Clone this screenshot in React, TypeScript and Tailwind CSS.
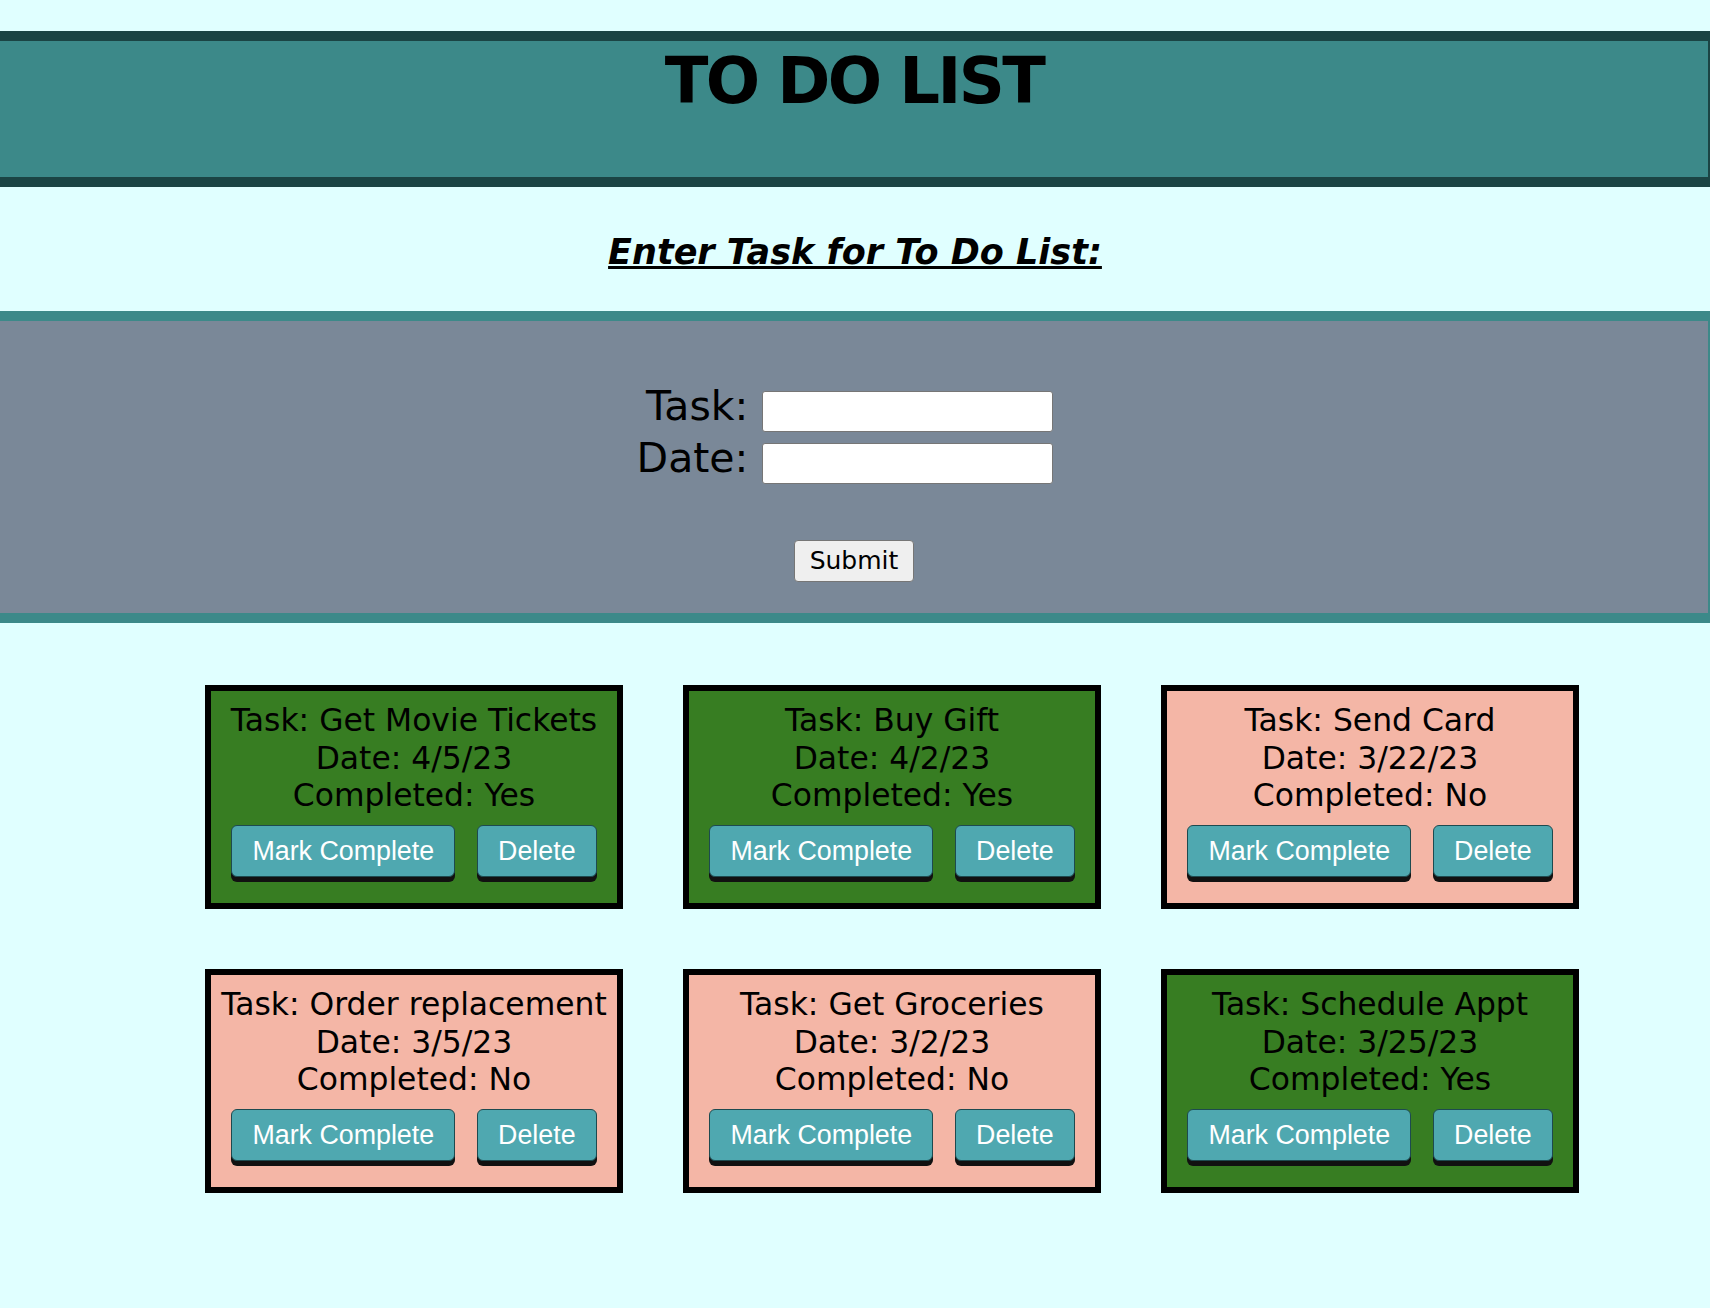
import React, { useState } from 'react';

type Task = {
  name: string;
  date: string;
  done: boolean;
};

const initialTasks: Task[] = [
  { name: 'Get Movie Tickets', date: '4/5/23', done: true },
  { name: 'Buy Gift', date: '4/2/23', done: true },
  { name: 'Send Card', date: '3/22/23', done: false },
  { name: 'Order replacement', date: '3/5/23', done: false },
  { name: 'Get Groceries', date: '3/2/23', done: false },
  { name: 'Schedule Appt', date: '3/25/23', done: true },
];

const TaskCard: React.FC<{ task: Task; onComplete: () => void; onDelete: () => void }> = ({ task, onComplete, onDelete }) => {
  return (
    <div
      className={`w-[418px] h-[224px] border-[6px] border-black pt-[11px] flex flex-col items-center text-center ${task.done ? 'bg-[#377d22]' : 'bg-[#f4b6a6]'}`}
    >
      <p className="text-[31.4px] leading-[37.5px] text-black whitespace-nowrap">Task: {task.name}</p>
      <p className="text-[31.4px] leading-[37.5px] text-black">Date: {task.date}</p>
      <p className="text-[31.4px] leading-[37.5px] text-black">Completed: {task.done ? 'Yes' : 'No'}</p>
      <div className="mt-[10px] flex gap-[22px]">
        <button
          onClick={onComplete}
          className="px-[20px] py-[10px] bg-[#4fa8b0] border border-[#1d4a4f] rounded-[6px] text-white text-[26.8px] leading-[30px] shadow-[0_5px_0_#111]"
          style={{ fontFamily: '"Liberation Sans", Arial, sans-serif' }}
        >
          Mark Complete
        </button>
        <button
          onClick={onDelete}
          className="px-[20px] py-[10px] bg-[#4fa8b0] border border-[#1d4a4f] rounded-[6px] text-white text-[26.8px] leading-[30px] shadow-[0_5px_0_#111]"
          style={{ fontFamily: '"Liberation Sans", Arial, sans-serif' }}
        >
          Delete
        </button>
      </div>
    </div>
  );
};

const App: React.FC = () => {
  const [tasks, setTasks] = useState<Task[]>(initialTasks);
  const [name, setName] = useState('');
  const [date, setDate] = useState('');

  const handleSubmit = (e: React.FormEvent) => {
    e.preventDefault();
    if (name.trim() === '') return;
    setTasks([...tasks, { name, date, done: false }]);
    setName('');
    setDate('');
  };

  return (
    <div className="min-h-screen bg-[#e0ffff] pt-[31px] pb-[100px] font-['DejaVu_Sans',sans-serif] text-black">
      <header className="h-[156px] bg-[#3c8989] border-y-[10px] border-r-2 border-[#1b4444] pt-[3px]">
        <h1 className="text-center text-[64px] leading-[74px] font-bold tracking-[-2.6px]">TO DO LIST</h1>
      </header>

      <h2 className="mt-[45px] text-center text-[35px] leading-[41px] font-bold italic underline">
        Enter Task for To Do List:
      </h2>

      <form
        onSubmit={handleSubmit}
        className="mt-[38px] h-[312px] bg-[#7a8898] border-y-[10px] border-r-2 border-[#3c8989] pt-[70px] flex flex-col items-center"
      >
        <div className="mr-[18px] grid grid-cols-[auto_291px] items-start gap-x-[14px] gap-y-[11px]">
          <label className="-mt-[5px] text-right text-[41px] leading-[41px]">Task:</label>
          <input
            value={name}
            onChange={(e) => setName(e.target.value)}
            className="w-[291px] h-[41px] bg-white border border-[#767676] rounded-[3px] px-2 text-[20px]"
          />
          <label className="-mt-[5px] text-right text-[41px] leading-[41px]">Date:</label>
          <input
            value={date}
            onChange={(e) => setDate(e.target.value)}
            className="w-[291px] h-[41px] bg-white border border-[#767676] rounded-[3px] px-2 text-[20px]"
          />
        </div>
        <button
          type="submit"
          className="mt-[56px] w-[120px] h-[42px] bg-[#efefef] border border-[#767676] rounded-[4px] text-[25px] leading-[30px]"
        >
          Submit
        </button>
      </form>

      <div className="mt-[62px] ml-[205px] grid grid-cols-[repeat(3,418px)] gap-x-[60px] gap-y-[60px]">
        {tasks.map((task, i) => (
          <TaskCard
            key={i}
            task={task}
            onComplete={() => setTasks(tasks.map((t, j) => (j === i ? { ...t, done: true } : t)))}
            onDelete={() => setTasks(tasks.filter((_, j) => j !== i))}
          />
        ))}
      </div>
    </div>
  );
};

export default App;
